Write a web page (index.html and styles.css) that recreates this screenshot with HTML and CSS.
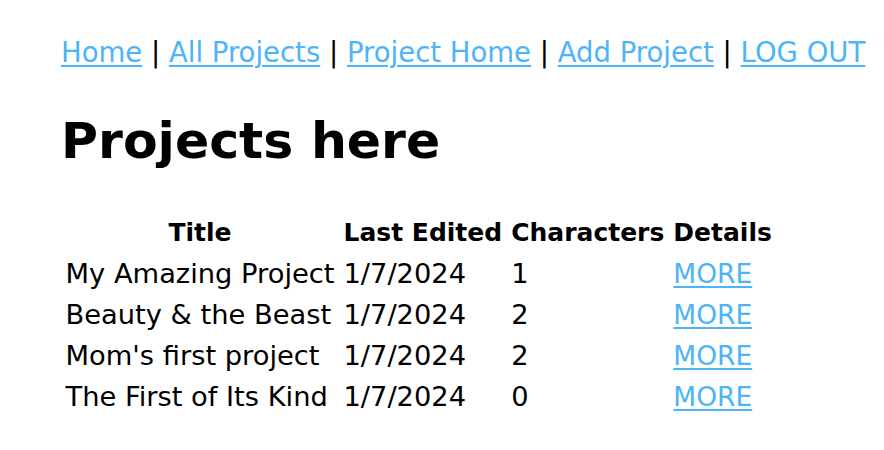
FILE: index.html
```html
<!DOCTYPE html>
<html>
<head>
<meta charset="utf-8">
<link rel="stylesheet" href="styles.css">
</head>
<body>
<div class="page">
  <nav class="nav">
    <a href="#">Home</a> | <a href="#">All Projects</a> | <a href="#">Project Home</a> | <a href="#">Add Project</a> | <a href="#">LOG OUT</a>
  </nav>
  <h1 class="title">Projects here</h1>
  <table class="projects">
    <thead>
      <tr><th>Title</th><th>Last Edited</th><th>Characters</th><th>Details</th></tr>
    </thead>
    <tbody>
      <tr><td>My Amazing Project</td><td>1/7/2024</td><td>1</td><td><a href="#">MORE</a></td></tr>
      <tr><td>Beauty &amp; the Beast</td><td>1/7/2024</td><td>2</td><td><a href="#">MORE</a></td></tr>
      <tr><td>Mom's first project</td><td>1/7/2024</td><td>2</td><td><a href="#">MORE</a></td></tr>
      <tr><td>The First of Its Kind</td><td>1/7/2024</td><td>0</td><td><a href="#">MORE</a></td></tr>
    </tbody>
  </table>
</div>
</body>
</html>
```
FILE: styles.css
```css
html, body {
  margin: 0;
  padding: 0;
  background: #ffffff;
}
body {
  font-family: "DejaVu Sans", "Liberation Sans", sans-serif;
  color: #000000;
}
.page {
  padding: 36px 0 0 61px;
}
.nav {
  font-size: 27.5px;
  line-height: 33px;
  white-space: nowrap;
}
.nav a, .projects a {
  color: #4db4f8;
  text-decoration: underline;
  text-decoration-thickness: 2px;
  text-underline-offset: 3px;
}
.title {
  font-size: 50.5px;
  font-weight: bold;
  margin: 38px 0 0 0;
  line-height: 68px;
}
.projects {
  margin-top: 37px;
  border-collapse: separate;
  border-spacing: 0;
  font-size: 27.3px;
}
.projects th, .projects td {
  padding: 0 4.5px;
  height: 41px;
  line-height: 31px;
  white-space: nowrap;
}
.projects th {
  font-size: 25px;
  font-weight: bold;
  text-align: center;
}
.projects td {
  text-align: left;
}
.projects td a {
  font-size: 26.5px;
}
```
